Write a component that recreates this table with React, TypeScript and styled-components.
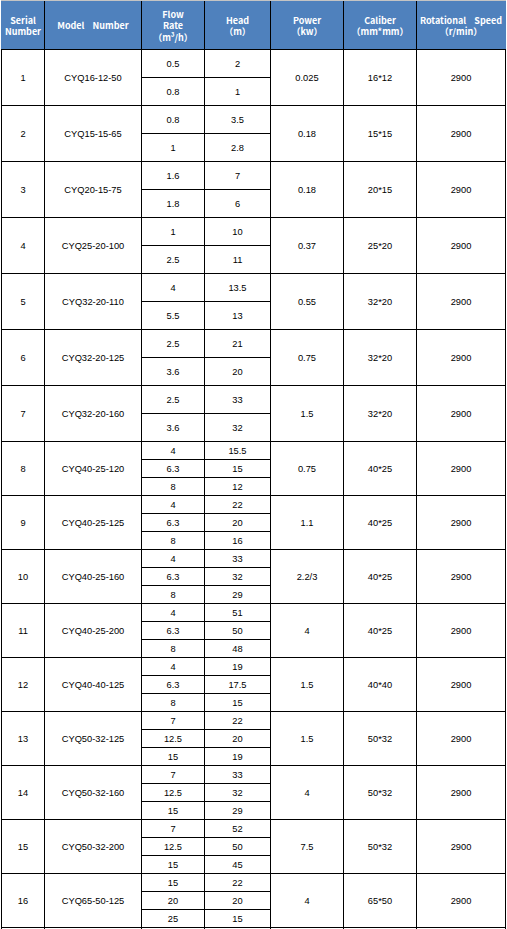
import { createGlobalStyle, styled } from "styled-components"

const GlobalStyle = createGlobalStyle`
    html, body {
        margin: 0;
        padding: 0;
        background: #ffffff;
    }
    body {
        font-family: "Liberation Sans", Arial, sans-serif;
        overflow: hidden;
    }
`

const COLUMNS = "42px 96px 62px 65px 72px 72px 88px"

const Page = styled.div`
    width: 507px;
    height: 929px;
    overflow: hidden;
    padding-left: 1px;
    box-sizing: border-box;
`

const Table = styled.div`
    width: 505px;
    box-sizing: border-box;
    display: flex;
    flex-direction: column;
    gap: 1px;
    padding: 0 1px 1px;
    background: #000000;
    border-top: 1px solid #c4c4c4;
`

const HeaderRow = styled.div`
    display: grid;
    grid-template-columns: ${COLUMNS};
    gap: 1px;
    height: 48px;
    margin: 0 -1px;
    border-left: 1px solid #4f81bd;
    border-right: 1px solid #4f81bd;
    background: #000000;
`

const HeaderCell = styled.div`
    background: #4f81bd;
    color: #ffffff;
    font-family: "Noto Sans CJK SC", "Noto Sans CJK JP", sans-serif;
    font-weight: 700;
    font-size: 9px;
    line-height: 11.5px;
    text-align: center;
    white-space: pre;
    text-spacing-trim: space-all;
    font-feature-settings: "fwid" 0;
    display: flex;
    flex-direction: column;
    align-items: center;
    justify-content: center;
    padding-top: 2px;
    box-sizing: border-box;
`

const GroupRow = styled.div`
    display: grid;
    grid-template-columns: ${COLUMNS};
    gap: 1px;
`

const Cell = styled.div`
    background: #ffffff;
    color: #000000;
    font-family: "Liberation Sans", Arial, sans-serif;
    font-size: 9.3px;
    display: flex;
    align-items: center;
    justify-content: center;
    padding-top: 1px;
    box-sizing: border-box;
`

const SubColumn = styled.div`
    display: flex;
    flex-direction: column;
    gap: 1px;
`

const SubCell = styled(Cell)<{ $h: number }>`
    height: ${p => p.$h}px;
`

// the next row of the sheet, cut off by the bottom of the window
const TailRow = styled(GroupRow)`
    height: 20px;
`

const TailCell = styled.div`
    background: #ffffff;
`

type Pump = {
    no: number
    model: string
    flow: string[]
    head: string[]
    power: string
    caliber: string
    speed: string
}

const pumps: Pump[] = [
    { no: 1, model: "CYQ16-12-50", flow: ["0.5", "0.8"], head: ["2", "1"], power: "0.025", caliber: "16*12", speed: "2900" },
    { no: 2, model: "CYQ15-15-65", flow: ["0.8", "1"], head: ["3.5", "2.8"], power: "0.18", caliber: "15*15", speed: "2900" },
    { no: 3, model: "CYQ20-15-75", flow: ["1.6", "1.8"], head: ["7", "6"], power: "0.18", caliber: "20*15", speed: "2900" },
    { no: 4, model: "CYQ25-20-100", flow: ["1", "2.5"], head: ["10", "11"], power: "0.37", caliber: "25*20", speed: "2900" },
    { no: 5, model: "CYQ32-20-110", flow: ["4", "5.5"], head: ["13.5", "13"], power: "0.55", caliber: "32*20", speed: "2900" },
    { no: 6, model: "CYQ32-20-125", flow: ["2.5", "3.6"], head: ["21", "20"], power: "0.75", caliber: "32*20", speed: "2900" },
    { no: 7, model: "CYQ32-20-160", flow: ["2.5", "3.6"], head: ["33", "32"], power: "1.5", caliber: "32*20", speed: "2900" },
    { no: 8, model: "CYQ40-25-120", flow: ["4", "6.3", "8"], head: ["15.5", "15", "12"], power: "0.75", caliber: "40*25", speed: "2900" },
    { no: 9, model: "CYQ40-25-125", flow: ["4", "6.3", "8"], head: ["22", "20", "16"], power: "1.1", caliber: "40*25", speed: "2900" },
    { no: 10, model: "CYQ40-25-160", flow: ["4", "6.3", "8"], head: ["33", "32", "29"], power: "2.2/3", caliber: "40*25", speed: "2900" },
    { no: 11, model: "CYQ40-25-200", flow: ["4", "6.3", "8"], head: ["51", "50", "48"], power: "4", caliber: "40*25", speed: "2900" },
    { no: 12, model: "CYQ40-40-125", flow: ["4", "6.3", "8"], head: ["19", "17.5", "15"], power: "1.5", caliber: "40*40", speed: "2900" },
    { no: 13, model: "CYQ50-32-125", flow: ["7", "12.5", "15"], head: ["22", "20", "19"], power: "1.5", caliber: "50*32", speed: "2900" },
    { no: 14, model: "CYQ50-32-160", flow: ["7", "12.5", "15"], head: ["33", "32", "29"], power: "4", caliber: "50*32", speed: "2900" },
    { no: 15, model: "CYQ50-32-200", flow: ["7", "12.5", "15"], head: ["52", "50", "45"], power: "7.5", caliber: "50*32", speed: "2900" },
    { no: 16, model: "CYQ65-50-125", flow: ["15", "20", "25"], head: ["22", "20", "15"], power: "4", caliber: "65*50", speed: "2900" },
]

// 2-point rows are 28px per line, 3-point rows 18px (line included)
const subHeight = (n: number) => (n === 2 ? 27 : 17)

const PumpRow = ({ pump }: { pump: Pump }) => {
    const h = subHeight(pump.flow.length)
    return (
        <GroupRow>
            <Cell>{pump.no}</Cell>
            <Cell>{pump.model}</Cell>
            <SubColumn>
                {pump.flow.map((v, i) => <SubCell key={i} $h={h}>{v}</SubCell>)}
            </SubColumn>
            <SubColumn>
                {pump.head.map((v, i) => <SubCell key={i} $h={h}>{v}</SubCell>)}
            </SubColumn>
            <Cell>{pump.power}</Cell>
            <Cell>{pump.caliber}</Cell>
            <Cell>{pump.speed}</Cell>
        </GroupRow>
    )
}

const App = () => {
    return (
        <>
            <GlobalStyle />
            <Page>
                <Table>
                    <HeaderRow>
                        <HeaderCell>{"Serial\nNumber"}</HeaderCell>
                        <HeaderCell>{"Model    Number"}</HeaderCell>
                        <HeaderCell>{"Flow\nRate\n（m³/h）"}</HeaderCell>
                        <HeaderCell>{"Head\n（m）"}</HeaderCell>
                        <HeaderCell>{"Power\n（kw）"}</HeaderCell>
                        <HeaderCell>{"Caliber\n（mm*mm）"}</HeaderCell>
                        <HeaderCell>{"Rotational    Speed\n（r/min）"}</HeaderCell>
                    </HeaderRow>
                    {pumps.map(p => <PumpRow key={p.no} pump={p} />)}
                    <TailRow>
                        {Array.from({ length: 7 }, (_, i) => <TailCell key={i} />)}
                    </TailRow>
                </Table>
            </Page>
        </>
    )
}

export default App
